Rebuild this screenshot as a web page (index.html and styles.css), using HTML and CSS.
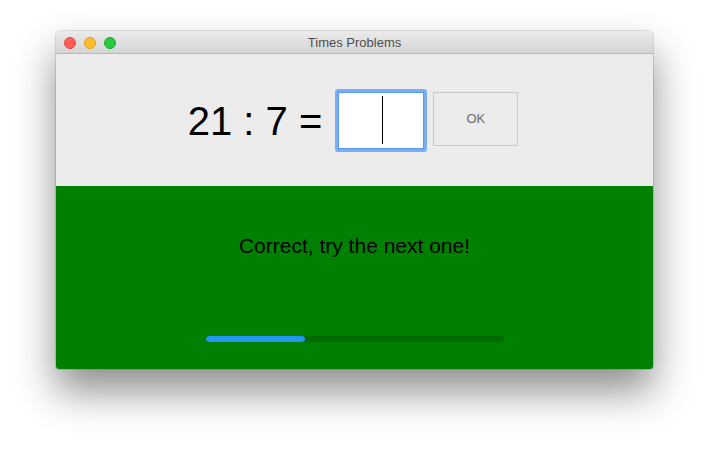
FILE: index.html
```html
<!DOCTYPE html>
<html>
<head>
<meta charset="utf-8">
<link rel="stylesheet" href="styles.css">
</head>
<body>
<div class="window">
  <div class="titlebar">
    <div class="lights">
      <span class="light red"></span>
      <span class="light yellow"></span>
      <span class="light green"></span>
    </div>
    <div class="title">Times Problems</div>
  </div>
  <div class="question">
    <div class="equation">21 : 7 =</div>
    <div class="answer"><span class="caret"></span></div>
    <div class="ok">OK</div>
  </div>
  <div class="feedback">
    <div class="message">Correct, try the next one!</div>
    <div class="progress"><div class="fill" style="width:33.3%"></div></div>
  </div>
</div>
</body>
</html>
```
FILE: styles.css
```css
html, body {
  margin: 0;
  padding: 0;
  background: #ffffff;
  width: 709px;
  height: 450px;
  overflow: hidden;
  font-family: "Liberation Sans", Arial, sans-serif;
}
body {
  padding: 31px 0 0 56px;
  box-sizing: border-box;
}
.window {
  width: 597px;
  height: 338px;
  border-radius: 5px 5px 3px 3px;
  overflow: hidden;
  display: flex;
  flex-direction: column;
  box-shadow: 0 22px 40px rgba(0,0,0,0.45), 0 0 0 1px rgba(0,0,0,0.12);
}
.titlebar {
  height: 22px;
  flex: none;
  position: relative;
  background: linear-gradient(#ebebeb, #d5d5d5);
  border-bottom: 1px solid #b8b8b8;
  display: flex;
  align-items: center;
  justify-content: center;
}
.lights {
  position: absolute;
  left: 8px;
  top: 6px;
  display: flex;
  gap: 8px;
}
.light {
  width: 12px;
  height: 12px;
  border-radius: 50%;
  box-sizing: border-box;
}
.red { background: #fe5f57; border: 1px solid #e2463f; }
.yellow { background: #febc2e; border: 1px solid #e1a116; }
.green { background: #28c840; border: 1px solid #14ae2a; }
.title {
  font-size: 13px;
  color: #4d4d4d;
  padding-top: 1px;
}
.question {
  height: 132px;
  flex: none;
  background: #ececec;
  display: flex;
  align-items: center;
  justify-content: center;
  padding-right: 3px;
  box-sizing: border-box;
}
.equation {
  font-size: 40px;
  color: #000;
  margin-right: 13px;
  margin-top: 2px;
}
.answer {
  width: 86px;
  height: 57px;
  background: #fff;
  border: 3px solid #79aef5;
  border-radius: 3px;
  box-shadow: inset 0 0 0 1px #5a98ee;
  display: flex;
  justify-content: center;
  align-items: center;
  margin-right: 6px;
}
.caret {
  width: 1px;
  height: 48px;
  background: #000;
  margin-left: 2px;
}
.ok {
  width: 83px;
  height: 52px;
  border: 1px solid #c8c8c8;
  background: #ebebeb;
  display: flex;
  align-items: center;
  justify-content: center;
  font-size: 13px;
  color: #6a6a6a;
  margin-top: -3px;
}
.feedback {
  flex: 1;
  background: #008000;
  display: flex;
  flex-direction: column;
  align-items: center;
}
.message {
  font-size: 21px;
  color: #000;
  margin-top: 48px;
}
.progress {
  margin-top: 78px;
  width: 298px;
  height: 6px;
  border-radius: 3px;
  background: #006a00;
  overflow: hidden;
}
.fill {
  height: 100%;
  background: #2196f3;
  border-radius: 3px;
}
```
